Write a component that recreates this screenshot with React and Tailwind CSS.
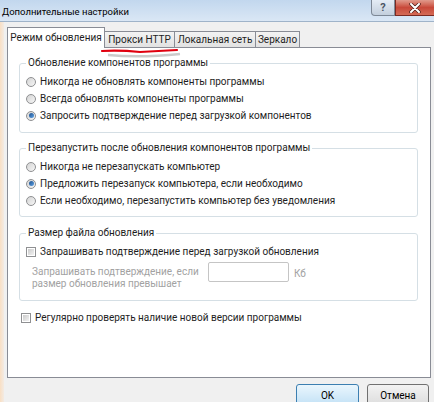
import React from 'react'

const font = { fontFamily: 'Roboto, "Liberation Sans", Arial, sans-serif' }

function Radio({ checked }) {
  return (
    <span className="relative w-[10px] h-[10px] shrink-0 rounded-full border border-[#8f9092] bg-gradient-to-br from-[#d4d4d4] to-[#f6f6f6] flex items-center justify-center">
      {checked && (
        <span className="w-[5px] h-[5px] rounded-full bg-gradient-to-br from-[#1c4f8c] to-[#5fa3e6]" />
      )}
    </span>
  )
}

function Check() {
  return (
    <span className="w-[10px] h-[10px] shrink-0 border border-[#8f9092] bg-white p-[1px] flex">
      <span className="flex-1 bg-gradient-to-br from-[#cbcbcb] to-[#f2f2f2]" />
    </span>
  )
}

function Group({ title, className, children }) {
  return (
    <div className={`relative border border-[#d5dfe5] rounded-[3px] pt-[9px] pl-[6px] ${className}`}>
      <span className="absolute -top-[8px] left-[6px] px-[2px] bg-white text-[10px] leading-[14px] text-[#1e1e1e] whitespace-nowrap">
        {title}
      </span>
      {children}
    </div>
  )
}

function Row({ children }) {
  return <div className="h-[17px] flex items-center gap-[4px] text-[10px] text-[#1e1e1e] whitespace-nowrap">{children}</div>
}

export default function App() {
  return (
    <div style={font} className="w-[434px] h-[402px] overflow-hidden bg-[#f0f0f0] flex flex-col relative">
      {/* заголовок окна */}
      <div className="h-[22px] shrink-0 flex items-start bg-gradient-to-b from-[#c2d7ee] to-[#dae7f5] border-b border-[#9fb3c9]">
        <span className="pl-[2px] pt-[5px] text-[9.5px] leading-[13px] text-black whitespace-nowrap">Дополнительные настройки</span>
        <div className="ml-auto flex">
          <div className="w-[24px] h-[16px] rounded-bl-[4px] border border-t-0 border-[#7d8896] bg-gradient-to-b from-[#e4ecf5] to-[#c3cfdd] flex items-center justify-center text-[11px] font-bold text-[#4a5563] leading-none">
            ?
          </div>
          <div className="w-[39px] h-[16px] border-b border-l border-[#7a2a22] bg-gradient-to-b from-[#e09a8c] via-[#c8493a] to-[#d46a55] flex items-center justify-center">
            <svg width="12" height="10" viewBox="0 0 12 10">
              <path d="M2 1 L10 9 M10 1 L2 9" stroke="#4a1d18" strokeWidth="3.4" strokeLinecap="round" />
              <path d="M2 1 L10 9 M10 1 L2 9" stroke="#fff" strokeWidth="2" strokeLinecap="round" />
            </svg>
          </div>
        </div>
      </div>

      <div className="flex-1 flex relative">
        <div className="w-[4px] shrink-0 bg-gradient-to-r from-[#f9dfc4] to-[#f3ebe3]" />
        <div className="flex-1 flex flex-col">
          {/* вкладки */}
          <div className="mt-[5px] h-[20px] flex items-end pl-[3px] relative z-10">
            <div className="h-[21px] w-[98px] -mb-px bg-white border border-b-0 border-[#898c95] flex items-center justify-center text-[10px] text-[#1e1e1e] pb-[1px] whitespace-nowrap">
              Режим обновления
            </div>
            <div className="h-[16px] w-[71px] -ml-px bg-gradient-to-b from-[#f3f3f3] to-[#e2e2e2] border border-b-0 border-[#898c95] flex items-center justify-center text-[10px] text-[#1e1e1e] whitespace-nowrap">
              Прокси HTTP
            </div>
            <div className="h-[16px] w-[82px] -ml-px bg-gradient-to-b from-[#f3f3f3] to-[#e2e2e2] border border-b-0 border-[#898c95] flex items-center justify-center text-[10px] text-[#1e1e1e] whitespace-nowrap">
              Локальная сеть
            </div>
            <div className="h-[16px] w-[45px] -ml-px bg-gradient-to-b from-[#f3f3f3] to-[#e2e2e2] border border-b-0 border-[#898c95] flex items-center justify-center text-[10px] text-[#1e1e1e] whitespace-nowrap">
              Зеркало
            </div>
          </div>

          {/* панель */}
          <div className="ml-[3px] w-[424px] h-[331px] bg-white border border-[#898c95] pt-[15px] pl-[11px] pr-[12px]">
            <Group title="Обновление компонентов программы" className="h-[70px]">
              <Row><Radio />Никогда не обновлять компоненты программы</Row>
              <Row><Radio />Всегда обновлять компоненты программы</Row>
              <Row><Radio checked />Запросить подтверждение перед загрузкой компонентов</Row>
            </Group>
            <Group title="Перезапустить после обновления компонентов программы" className="h-[69px] mt-[15px]">
              <Row><Radio />Никогда не перезапускать компьютер</Row>
              <Row><Radio checked />Предложить перезапуск компьютера, если необходимо</Row>
              <Row><Radio />Если необходимо, перезапустить компьютер без уведомления</Row>
            </Group>
            <Group title="Размер файла обновления" className="h-[68px] mt-[16px]">
              <Row><Check />Запрашивать подтверждение перед загрузкой обновления</Row>
              <div className="flex items-start mt-[2px] pl-[6px]">
                <div className="w-[176px] pt-[4px] text-[10px] leading-[12px] text-[#a2a2a2] whitespace-nowrap">
                  Запрашивать подтверждение, если
                  <br />
                  размер обновления превышает
                </div>
                <div className="w-[81px] h-[20px] border border-[#c5c5c5] rounded-[2px] bg-white" />
                <span className="ml-[5px] pt-[6px] text-[10px] leading-[12px] text-[#a2a2a2]">Кб</span>
              </div>
            </Group>
            <div className="mt-[8px] pl-[2px]">
              <Row><Check />Регулярно проверять наличие новой версии программы</Row>
            </div>
          </div>

          {/* кнопки */}
          <div className="mt-[6px] flex justify-end gap-[8px] pr-[5px]">
            <button className="w-[63px] h-[23px] rounded-[3px] border border-[#3c7fb1] bg-gradient-to-b from-[#eaf6fd] to-[#c0e0f5] text-[10px] text-black">
              OK
            </button>
            <button className="w-[62px] h-[23px] rounded-[3px] border border-[#707070] bg-gradient-to-b from-[#f2f2f2] to-[#dcdcdc] text-[10px] text-black">
              Отмена
            </button>
          </div>
        </div>

        {/* красная пометка */}
        <svg className="absolute left-0 top-0 pointer-events-none" width="200" height="40">
          <path d="M108 33 Q140 36 180 32" stroke="#6b6b6b" strokeOpacity="0.35" strokeWidth="2.5" fill="none" />
          <path d="M102 29 Q120 28 140 30 Q160 29 177 28" stroke="#e0000f" strokeWidth="2.2" fill="none" strokeLinecap="round" />
        </svg>
      </div>
    </div>
  )
}
